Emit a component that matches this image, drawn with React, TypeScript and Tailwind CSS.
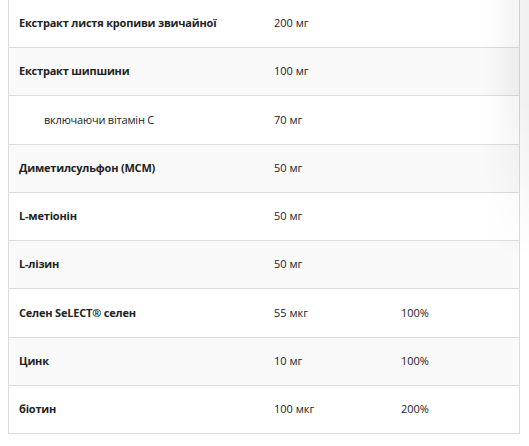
import React from "react";

const rows: { name: string; amount: string; dv?: string; sub?: boolean }[] = [
  { name: "Екстракт листя кропиви звичайної", amount: "200 мг" },
  { name: "Екстракт шипшини", amount: "100 мг" },
  { name: "включаючи вітамін С", amount: "70 мг", sub: true },
  { name: "Диметилсульфон (МСМ)", amount: "50 мг" },
  { name: "L-метіонін", amount: "50 мг" },
  { name: "L-лізин", amount: "50 мг" },
  { name: "Селен SeLECT® селен", amount: "55 мкг", dv: "100%" },
  { name: "Цинк", amount: "10 мг", dv: "100%" },
  { name: "біотин", amount: "100 мкг", dv: "200%" },
];

export default function App() {
  return (
    <div className="relative w-[529px] h-[446px] overflow-hidden bg-white font-['Open_Sans',sans-serif] text-[#222]">
      <div className="ml-[8px] mt-[-1.25px] w-[512px] border-x border-b border-[#dcdcdc]">
        {rows.map((r, i) => (
          <div
            key={i}
            className={`flex items-center h-[48.25px] border-t border-[#dcdcdc] ${i % 2 === 1 ? "bg-[#f9f9f9]" : "bg-white"}`}
          >
            <div
              className={`w-[265px] shrink-0 ${r.sub ? "pl-[35px] font-normal text-[11px] tracking-[-0.2px]" : "pl-[10px] font-bold text-[11px] tracking-[-0.2px]"}`}
            >
              {r.name}
            </div>
            <div className="w-[127px] shrink-0 text-[11px]">{r.amount}</div>
            <div className="text-[11px]">{r.dv ?? ""}</div>
          </div>
        ))}
      </div>
      <div className="pointer-events-none absolute right-0 top-0 h-[260px] w-[45px] bg-[linear-gradient(to_right,rgba(0,0,0,0),rgba(0,0,0,0.06))] [mask-image:linear-gradient(to_bottom,black,black_40%,transparent)]" />
    </div>
  );
}
